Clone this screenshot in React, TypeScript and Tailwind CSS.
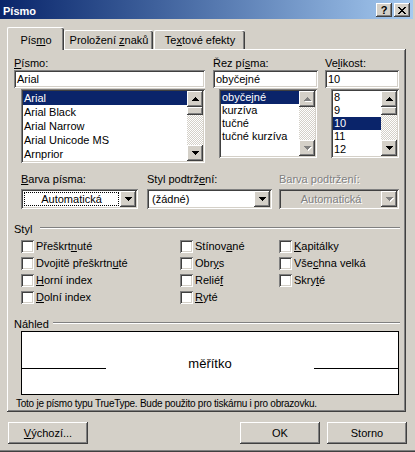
import React from "react";

const raised =
  "shadow-[inset_-1px_-1px_#404040,inset_1px_1px_#ffffff,inset_-2px_-2px_#808080,inset_2px_2px_#d4d0c8]";
const sunken =
  "shadow-[inset_1px_1px_#808080,inset_-1px_-1px_#ffffff,inset_2px_2px_#404040,inset_-2px_-2px_#d4d0c8]";
const checker =
  "bg-[image:repeating-conic-gradient(#d4d0c8_0_25%,#ffffff_0_50%)] [background-size:2px_2px]";

function U({ children }: { children: React.ReactNode }) {
  return <span className="underline underline-offset-[1px]">{children}</span>;
}

function Tri({ dir, disabled }: { dir: "up" | "down"; disabled?: boolean }) {
  const rows = dir === "down" ? [0, 1, 2, 3] : [3, 2, 1, 0];
  const draw = (fill: string, dx: number, dy: number) =>
    rows.map((r, i) => (
      <rect key={fill + i} x={r + dx} y={i + dy} width={7 - r * 2} height={1} fill={fill} />
    ));
  return (
    <svg width="8" height="5" shapeRendering="crispEdges">
      {disabled && draw("#ffffff", 1, 1)}
      {draw(disabled ? "#808080" : "#000000", 0, 0)}
    </svg>
  );
}

function ArrowBtn({ dir, disabled }: { dir: "up" | "down"; disabled?: boolean }) {
  return (
    <div className={`flex h-[16px] w-[16px] shrink-0 items-center justify-center bg-[#d4d0c8] pl-[1px] ${raised}`}>
      <Tri dir={dir} disabled={disabled} />
    </div>
  );
}

function ScrollBar({ thumb, disabled }: { thumb?: boolean; disabled?: boolean }) {
  return (
    <div className="flex w-[16px] shrink-0 flex-col">
      <ArrowBtn dir="up" disabled={disabled} />
      {thumb && <div className={`h-[8px] w-[16px] shrink-0 bg-[#d4d0c8] ${raised}`} />}
      <div className={`flex-1 ${checker}`} />
      <ArrowBtn dir="down" disabled={disabled} />
    </div>
  );
}

function ListBox({
  items,
  selected,
  row,
  className,
  thumb,
  disabled,
}: {
  items: string[];
  selected: number;
  row: string;
  className: string;
  thumb?: boolean;
  disabled?: boolean;
}) {
  return (
    <div className={`flex bg-white p-[2px] ${sunken} ${className}`}>
      <div className="min-w-0 flex-1 overflow-hidden">
        {items.map((it, i) => (
          <div
            key={it}
            className={`${row} whitespace-nowrap pl-[1px] ${i === selected ? "bg-[#0a246a] text-white" : ""}`}
          >
            {it}
          </div>
        ))}
      </div>
      <ScrollBar thumb={thumb} disabled={disabled} />
    </div>
  );
}

function Field({ text }: { text: string }) {
  return <div className={`h-[18px] bg-white pl-[3px] pt-[3px] leading-[13px] ${sunken}`}>{text}</div>;
}

function Combo({
  text,
  className,
  focus,
  disabled,
  center,
}: {
  text: string;
  className: string;
  focus?: boolean;
  disabled?: boolean;
  center?: boolean;
}) {
  return (
    <div className={`flex h-[20px] p-[2px] ${disabled ? "bg-[#d4d0c8]" : "bg-white"} ${sunken} ${className}`}>
      <div className="flex min-w-0 flex-1 p-[1px]">
        <div
          className={`flex flex-1 items-center ${center ? "justify-center" : "pl-[2px]"} ${
            focus ? "border border-dotted border-black" : ""
          } ${disabled ? "text-[#808080] [text-shadow:1px_1px_#ffffff]" : ""}`}
        >
          {text}
        </div>
      </div>
      <ArrowBtn dir="down" disabled={disabled} />
    </div>
  );
}

function Check({ children }: { children: React.ReactNode }) {
  return (
    <div className="flex h-[17px] items-center gap-[2px]">
      <div className={`h-[13px] w-[13px] shrink-0 bg-white ${sunken}`} />
      <span className="whitespace-nowrap">{children}</span>
    </div>
  );
}

function GroupHead({ title, w }: { title: string; w: string }) {
  return (
    <div className="flex h-[13px] pr-[6px]">
      <span className={`${w} shrink-0`}>{title}</span>
      <div className="mt-[4px] h-[2px] flex-1 border-t border-b border-t-[#808080] border-b-white" />
    </div>
  );
}

function Button({ children }: { children: React.ReactNode }) {
  return (
    <div className={`flex h-[22px] w-[80px] items-center justify-center bg-[#d4d0c8] ${raised}`}>{children}</div>
  );
}

export default function App() {
  return (
    <div className="flex h-[452px] w-[415px] flex-col overflow-hidden bg-[#d4d0c8] font-['Liberation_Sans',sans-serif] text-[11px] leading-[13px] text-black">
      {/* title bar */}
      <div className="flex h-[19px] w-[413px] bg-linear-to-r from-[#0a246a] to-[#a6caf0] pl-[3px] pr-[3px]">
        <span className="pt-[5px] font-bold text-white">Písmo</span>
        <div className="ml-auto mt-[3px] flex gap-[2px]">
          <div className={`flex h-[14px] w-[16px] items-center justify-center bg-[#d4d0c8] text-[11px] font-bold ${raised}`}>
            ?
          </div>
          <div className={`flex h-[14px] w-[16px] items-center justify-center bg-[#d4d0c8] ${raised}`}>
            <svg width="8" height="7" viewBox="0 0 8 7" shapeRendering="crispEdges">
              <path d="M0 0h2v1H0zM1 1h2v1H1zM2 2h4v1H2zM3 3h2v1H3zM2 4h4v1H2zM1 5h2v1H1zM0 6h2v1H0zM6 0h2v1H6zM5 1h2v1H5zM5 5h2v1H5zM6 6h2v1H6z" fill="#000" />
            </svg>
          </div>
        </div>
      </div>

      {/* tabs */}
      <div className="mt-[8px] flex h-[22px] pl-[7px]">
        <div className="relative z-10 h-[23px] w-[57px] self-start rounded-t-[2px] border-l border-t border-white bg-[#d4d0c8] pt-[6px] text-center shadow-[inset_-1px_0_#404040,inset_-2px_0_#808080]">
          Pís<U>m</U>o
        </div>
        <div className="h-[19px] w-[89px] self-end rounded-t-[2px] border-l border-t border-white pt-[3px] text-center shadow-[inset_-1px_0_#404040,inset_-2px_0_#808080]">
          Proložení <U>z</U>naků
        </div>
        <div className="ml-[1px] h-[19px] w-[91px] self-end rounded-t-[2px] border-l border-t border-white pt-[3px] text-center shadow-[inset_-1px_0_#404040,inset_-2px_0_#808080]">
          Te<U>x</U>tové efekty
        </div>
      </div>

      {/* panel */}
      <div className={`ml-[7px] h-[363px] w-[399px] shrink-0 pl-[7px] pt-[8px] ${raised}`}>
        <div className="flex">
          <div className="w-[191px]">
            <div className="h-[13px]">
              <U>P</U>ísmo:
            </div>
            <Field text="Arial" />
            <ListBox
              className="ml-[7px] mt-[1px] h-[74px]"
              row="h-[14px] leading-[14px]"
              items={["Arial", "Arial Black", "Arial Narrow", "Arial Unicode MS", "Arnprior"]}
              selected={0}
              thumb
            />
          </div>
          <div className="ml-[8px] w-[105px]">
            <div className="h-[13px]">
              Řez pí<U>s</U>ma:
            </div>
            <Field text="obyčejné" />
            <ListBox
              className="ml-[6px] mt-[1px] h-[69px] w-[98px]"
              row="h-[13px] leading-[13px]"
              items={["obyčejné", "kurzíva", "tučné", "tučné kurzíva"]}
              selected={0}
              disabled
            />
          </div>
          <div className="ml-[7px] w-[74px]">
            <div className="h-[13px]">
              Ve<U>l</U>ikost:
            </div>
            <Field text="10" />
            <ListBox
              className="ml-[6px] mt-[1px] h-[69px]"
              row="h-[13px] leading-[13px]"
              items={["8", "9", "10", "11", "12"]}
              selected={2}
              thumb
            />
          </div>
        </div>

        {/* combos */}
        <div className="mt-[10px] flex pl-[7px]">
          <div className="w-[117px]">
            <div className="h-[13px]">
              <U>B</U>arva písma:
            </div>
            <Combo className="mt-[3px]" text="Automatická" focus center />
          </div>
          <div className="ml-[9px] w-[125px]">
            <div className="h-[13px]">
              Styl podtrž<U>e</U>ní:
            </div>
            <Combo className="mt-[3px]" text="(žádné)" />
          </div>
          <div className="ml-[7px] w-[120px]">
            <div className="h-[13px] text-[#808080] [text-shadow:1px_1px_#ffffff]">Barva podtržení:</div>
            <Combo className="mt-[3px]" text="Automatická" disabled center />
          </div>
        </div>

        {/* styl */}
        <div className="mt-[14px]">
          <GroupHead title="Styl" w="w-[26px]" />
        </div>
        <div className="mt-[2px] flex pl-[7px]">
          <div className="w-[159px]">
            <Check>
              Přeškrt<U>n</U>uté
            </Check>
            <Check>
              Dvojitě přeškrtn<U>u</U>té
            </Check>
            <Check>
              <U>H</U>orní index
            </Check>
            <Check>
              <U>D</U>olní index
            </Check>
          </div>
          <div className="w-[99px]">
            <Check>
              Stínov<U>a</U>né
            </Check>
            <Check>
              Obr<U>y</U>s
            </Check>
            <Check>
              Relié<U>f</U>
            </Check>
            <Check>
              <U>R</U>yté
            </Check>
          </div>
          <div>
            <Check>
              <U>K</U>apitálky
            </Check>
            <Check>
              Vše<U>c</U>hna velká
            </Check>
            <Check>
              Skry<U>t</U>é
            </Check>
          </div>
        </div>

        {/* náhled */}
        <div className="mt-[12px]">
          <GroupHead title="Náhled" w="w-[39px]" />
        </div>
        <div className="ml-[7px] h-[64px] w-[378px] border border-black bg-white">
          <div className="flex items-end pt-[24px]">
            <div className="mb-[2px] h-px w-[84px] bg-black" />
            <div className="flex-1 text-center text-[13px] leading-[15px]">měřítko</div>
            <div className="mb-[2px] h-px w-[84px] bg-black" />
          </div>
        </div>
        <div className="ml-[2px] mt-[2px] whitespace-nowrap text-[10px] tracking-[-0.25px]">
          Toto je písmo typu TrueType. Bude použito pro tiskárnu i pro obrazovku.
        </div>
      </div>

      {/* buttons */}
      <div className="mt-[10px] flex px-[8px]">
        <Button>
          <U>V</U>ýchozí...
        </Button>
        <div className="ml-auto flex gap-[7px]">
          <Button>OK</Button>
          <Button>Storno</Button>
        </div>
      </div>

      <div className="mt-auto h-[2px] border-t border-b border-t-[#808080] border-b-[#404040]" />
    </div>
  );
}
